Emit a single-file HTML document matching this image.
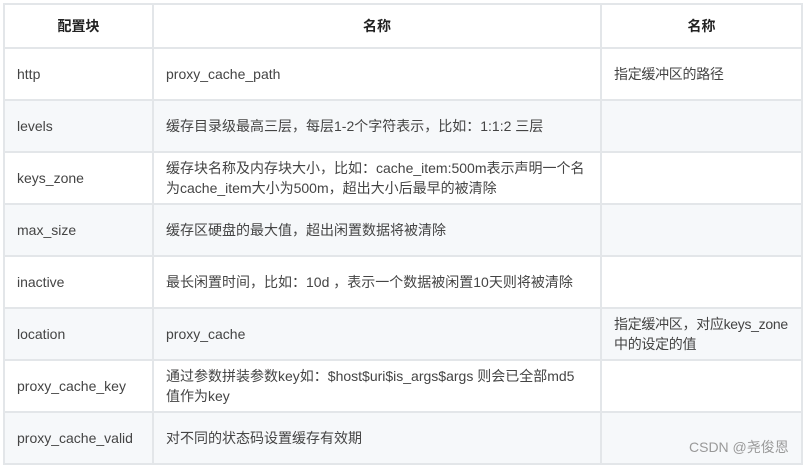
<html><head><style>
body{margin:0;background:#fff;width:804px;height:465px;overflow:hidden;font-family:"Liberation Sans","Noto Sans CJK SC",sans-serif;}
table{position:absolute;left:3px;top:3px;border-collapse:collapse;table-layout:fixed;width:798px;font-size:14px;color:#444;}
td,th{border:2px solid #e3e6e9;padding:0 12px;vertical-align:middle;line-height:20px;overflow:hidden;}
td:nth-child(3){padding:0 2px 0 12px;letter-spacing:-0.3px;}
tr{height:52px;}
tr.h{height:44px;}
th{font-weight:bold;text-align:center;color:#222;}
tr:nth-child(odd) td{background:#f6f8fa;}
.wm{position:absolute;left:689px;top:437px;font-size:14px;color:#999;}
</style></head><body>
<table>
<colgroup><col style="width:149px"><col style="width:448px"><col style="width:201px"></colgroup>
<tr class="h"><th>配置块</th><th>名称</th><th>名称</th></tr>
<tr><td>http</td><td>proxy_cache_path</td><td>指定缓冲区的路径</td></tr>
<tr><td>levels</td><td>缓存目录级最高三层，每层1-2个字符表示，比如：1:1:2 三层</td><td></td></tr>
<tr><td>keys_zone</td><td>缓存块名称及内存块大小，比如：cache_item:500m表示声明一个名为cache_item大小为500m，超出大小后最早的被清除</td><td></td></tr>
<tr><td>max_size</td><td>缓存区硬盘的最大值，超出闲置数据将被清除</td><td></td></tr>
<tr><td>inactive</td><td>最长闲置时间，比如：10d ，表示一个数据被闲置10天则将被清除</td><td></td></tr>
<tr><td>location</td><td>proxy_cache</td><td>指定缓冲区，对应keys_zone<br>中的设定的值</td></tr>
<tr><td>proxy_cache_key</td><td>通过参数拼装参数key如：$host$uri$is_args$args 则会已全部md5值作为key</td><td></td></tr>
<tr><td>proxy_cache_valid</td><td>对不同的状态码设置缓存有效期</td><td></td></tr>
</table>
<div class="wm">CSDN @尧俊恩</div>
</body></html>
